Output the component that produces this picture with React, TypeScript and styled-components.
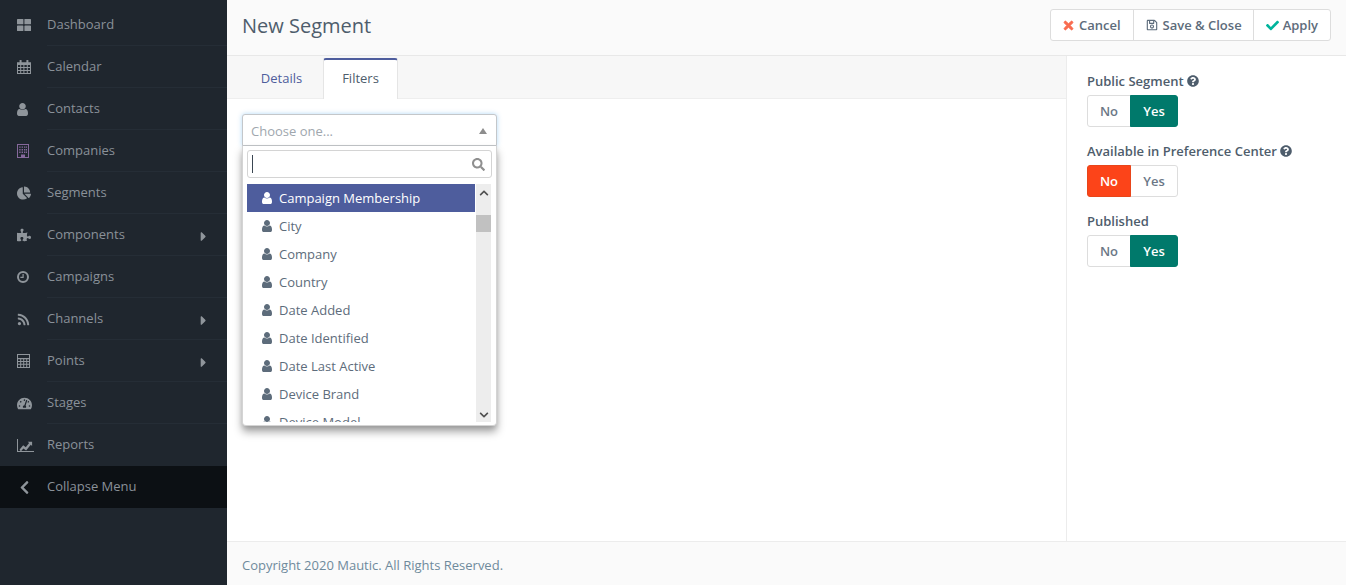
import React from 'react';
import styled, { createGlobalStyle } from 'styled-components';
import {
  FaChartPie, FaPuzzlePiece, FaRss, FaTachometerAlt, FaChevronLeft, FaCaretRight, FaTimes, FaRegSave,
  FaCheck, FaQuestionCircle, FaSearch, FaChevronUp, FaChevronDown,
} from 'react-icons/fa';

const Global = createGlobalStyle`
  html, body { margin: 0; padding: 0; height: 100%; overflow: hidden; background: #fff; }
  body { font-family: "Open Sans", "Liberation Sans", sans-serif; font-size: 13px; color: #4e5d6c; }
  #root { height: 100%; }
`;

const Shell = styled.div`
  display: flex;
  width: 1346px;
  height: 585px;
`;

const Sidebar = styled.nav`
  width: 227px;
  flex: none;
  background: #1f262e;
  padding-top: 4px;
  box-sizing: border-box;
`;

const NavRow = styled.div<{ $dark?: boolean }>`
  display: flex;
  align-items: center;
  height: 42px;
  box-sizing: border-box;
  padding-left: 17px;
  background: ${p => (p.$dark ? '#0c1014' : 'transparent')};
`;

const NavIcon = styled.span`
  width: 30px;
  flex: none;
  display: flex;
  align-items: center;
  color: #8f959b;
  font-size: 15px;
`;

const NavLabel = styled.span<{ $line?: boolean }>`
  flex: 1;
  align-self: stretch;
  display: flex;
  align-items: center;
  justify-content: space-between;
  padding: 0 16px 2px 0;
  font-size: 13px;
  color: #8a9199;
  border-bottom: 1px solid ${p => (p.$line ? '#252d36' : 'transparent')};
`;

const Arrow = styled(FaCaretRight)`
  color: #8f959b;
  font-size: 15px;
  margin-top: 5px;
`;

const Glyph = styled.svg`
  display: block;
  fill: currentColor;
  flex: none;
`;

const UserGlyph = ({ w, h }: { w: number; h: number }) => (
  <Glyph width={w} height={h} viewBox="256 128 1280 1536" preserveAspectRatio="none">
    <path d="M1536 1399q0 109-62.5 187t-150.5 78h-854q-88 0-150.5-78t-62.5-187q0-85 8.5-160.5t31.5-152 58.5-131 94-89 134.5-34.5q131 128 313 128t313-128q76 0 134.5 34.5t94 89 58.5 131 31.5 152 8.5 160.5zm-256-887q0 159-112.5 271.5t-271.5 112.5-271.5-112.5-112.5-271.5 112.5-271.5 271.5-112.5 271.5 112.5 112.5 271.5z" />
  </Glyph>
);

const GridGlyph = () => (
  <Glyph width="14" height="12" viewBox="0 0 14 12">
    <rect x="0" y="0" width="6.4" height="5.3" rx="0.6" />
    <rect x="7.4" y="0" width="6.6" height="5.3" rx="0.6" />
    <rect x="0" y="6.5" width="6.4" height="5.5" rx="0.6" />
    <rect x="7.4" y="6.5" width="6.6" height="5.5" rx="0.6" />
  </Glyph>
);

const CalendarGlyph = () => (
  <Glyph width="14" height="14" viewBox="0 0 14 14">
    <path fillRule="evenodd" d="M0 2.2h14V14H0zM1 5v2h2.2V5zm3.2 0v2h2.2V5zm3.2 0v2h2.4V5zm3.4 0v2H13V5zM1 8v2h2.2V8zm3.2 0v2h2.2V8zm3.2 0v2h2.4V8zm3.4 0v2H13V8zM1 11v2h2.2v-2zm3.2 0v2h2.2v-2zm3.2 0v2h2.4v-2zm3.4 0v2H13v-2z" />
    <rect x="2.6" y="0" width="2" height="3.4" rx="0.6" />
    <rect x="9.4" y="0" width="2" height="3.4" rx="0.6" />
  </Glyph>
);

const BuildingGlyph = () => (
  <Glyph width="12" height="14" viewBox="0 0 12 14" color="#85689b">
    <path fillRule="evenodd" d="M0 0h12v14H0zM1 1v12h3v-2.4h4V13h3V1z" />
    <path d="M2.2 2.4h1.4v1.4H2.2zM4.6 2.4H6v1.4H4.6zM7 2.4h1.4v1.4H7zM9 2.4h1v1.4H9zM2.2 5h1.4v1.4H2.2zM4.6 5H6v1.4H4.6zM7 5h1.4v1.4H7zM9 5h1v1.4H9zM2.2 7.6h1.4V9H2.2zM4.6 7.6H6V9H4.6zM7 7.6h1.4V9H7zM9 7.6h1V9H9z" />
  </Glyph>
);

const ClockGlyph = () => (
  <Glyph width="12" height="12" viewBox="0 0 12 12">
    <circle cx="6" cy="6" r="5" fill="none" stroke="currentColor" strokeWidth="2" />
    <path d="M5.5 3h1.2v3.9H3.4V5.8h2.1z" />
  </Glyph>
);

const CalcGlyph = () => (
  <Glyph width="13" height="14" viewBox="0 0 13 14">
    <path fillRule="evenodd" d="M0 0h13v14H0zM1 1v3h11V1zM1 5.2V7h2.2V5.2zm3.2 0V7h2V5.2zm3 0V7h2V5.2zm3 0V7H12V5.2zM1 8v1.8h2.2V8zm3.2 0v1.8h2V8zm3 0v1.8h2V8zm3 0v1.8H12V8zM1 10.8V13h2.2v-2.2zm3.2 0V13h2v-2.2zm3 0V13h2v-2.2zm3 0V13H12v-2.2z" />
  </Glyph>
);

const ChartGlyph = () => (
  <Glyph width="17" height="13" viewBox="0 0 17 13">
    <path d="M0 0h1v12h16v1H0z" />
    <path d="M2.6 10.4l3.6-4.2 2.6 2 3.3-4.2-1.4-1.2h4.4v4.3l-1.3-1.3-4.7 5.6-2.7-2-2.6 3z" />
  </Glyph>
);

const Main = styled.div`
  flex: 1;
  min-width: 0;
  display: flex;
  flex-direction: column;
`;

const Header = styled.header`
  height: 56px;
  box-sizing: border-box;
  flex: none;
  display: flex;
  align-items: center;
  justify-content: space-between;
  padding: 0 15px;
  background: #fafafa;
  border-bottom: 1px solid #e8e8e8;
`;

const Title = styled.h1`
  margin: 0 0 4px;
  font-size: 20px;
  font-weight: 400;
  color: #4e5d6c;
`;

const ButtonGroup = styled.div`
  display: flex;
  height: 32px;
  margin-top: -5px;
  border: 1px solid #ddd;
  border-radius: 3px;
  background: #fff;
  box-sizing: border-box;
`;

const ToolButton = styled.button<{ $left: number; $right: number; $gap: number }>`
  display: flex;
  align-items: center;
  gap: ${p => p.$gap}px;
  height: 100%;
  padding: 0 ${p => p.$right}px 0 ${p => p.$left}px;
  border: 0;
  border-left: 1px solid #ddd;
  background: transparent;
  font: 600 13px "Open Sans", sans-serif;
  color: #5d6c7b;
  &:first-child { border-left: 0; }
`;

const CancelIcon = styled(FaTimes)`
  color: #f86b4f;
  font-size: 13px;
  stroke: currentColor;
  stroke-width: 30;
`;

const Body = styled.div`
  flex: 1;
  min-height: 0;
  display: flex;
`;

const Content = styled.section`
  width: 840px;
  flex: none;
  box-sizing: border-box;
  border-right: 1px solid #ececec;
`;

const Tabs = styled.div`
  display: flex;
  height: 43px;
  box-sizing: border-box;
  padding-left: 15px;
  background: #f7f7f7;
  border-bottom: 1px solid #eee;
`;

const Tab = styled.div<{ $active?: boolean }>`
  display: flex;
  align-items: center;
  justify-content: center;
  height: 41px;
  box-sizing: border-box;
  margin-top: 2px;
  width: ${p => (p.$active ? 75 : 81)}px;
  padding: 0 ${p => (p.$active ? 0 : 2)}px 4px 0;
  font-size: 13px;
  color: ${p => (p.$active ? '#4e5d6c' : '#4e5d9c')};
  background: ${p => (p.$active ? '#fff' : 'transparent')};
  border-top: 2px solid ${p => (p.$active ? '#4e5d9d' : 'transparent')};
  border-left: 1px solid ${p => (p.$active ? '#e5e5e5' : 'transparent')};
  border-right: 1px solid ${p => (p.$active ? '#e5e5e5' : 'transparent')};
  border-radius: 3px 3px 0 0;
`;

const Pane = styled.div`
  position: relative;
  padding: 15px;
`;

const Select = styled.div`
  width: 255px;
  box-sizing: border-box;
  height: 32px;
  display: flex;
  align-items: center;
  justify-content: space-between;
  padding: 1px 9px 0 8px;
  background: #fff;
  border: 1px solid #c4c7ca;
  border-radius: 3px 3px 0 0;
  box-shadow: 0 0 5px rgba(82, 168, 236, 0.45);
  color: #a0a7ae;
  font-size: 13px;
`;

const Caret = styled.span`
  width: 0;
  height: 0;
  border-left: 4px solid transparent;
  border-right: 4px solid transparent;
  border-bottom: 6px solid #8d8d8d;
`;

const Drop = styled.div`
  position: absolute;
  left: 15px;
  top: 47px;
  width: 255px;
  height: 280px;
  box-sizing: border-box;
  padding: 4px 4px 0;
  background: #fff;
  border: 1px solid #d4d4d4;
  border-top: 0;
  border-radius: 0 0 4px 4px;
  box-shadow: 0 6px 8px rgba(0, 0, 0, 0.35), 0 2px 4px rgba(0, 0, 0, 0.1);
`;

const SearchBox = styled.div`
  height: 28px;
  box-sizing: border-box;
  display: flex;
  align-items: center;
  justify-content: space-between;
  padding: 0 6px 0 4px;
  border: 1px solid #d4d4d4;
  border-radius: 3px;
`;

const Cursor = styled.span`
  width: 1px;
  height: 18px;
  background: #3a4652;
`;

const SearchIcon = styled(FaSearch)`
  color: #8f8f8f;
  font-size: 13px;
`;

const ListWrap = styled.div`
  display: flex;
  margin-top: 6px;
  height: 238px;
`;

const Options = styled.ul`
  flex: 1;
  min-width: 0;
  margin: 0 1px 0 0;
  padding: 0;
  list-style: none;
  overflow: hidden;
`;

const Option = styled.li<{ $active?: boolean }>`
  display: flex;
  align-items: center;
  gap: 7px;
  height: 28px;
  padding-left: 15px;
  font-size: 13px;
  background: ${p => (p.$active ? '#4e5d9d' : 'transparent')};
  color: ${p => (p.$active ? '#fff' : '#5d6c7b')};
`;

const Track = styled.div`
  width: 15px;
  flex: none;
  margin-right: 1px;
  display: flex;
  flex-direction: column;
  align-items: center;
  background: #ededed;
  color: #505050;
  font-size: 10px;
`;

const TrackButton = styled.span`
  height: 15px;
  flex: none;
  display: flex;
  align-items: center;
  justify-content: center;
  margin-top: 1px;
`;

const Thumb = styled.div`
  width: 100%;
  height: 17px;
  margin-top: 15px;
  background: #c1c1c1;
`;

const Spring = styled.div`
  flex: 1;
`;

const Aside = styled.aside`
  flex: 1;
  padding: 15px 20px;
`;

const FieldLabel = styled.div`
  display: flex;
  align-items: center;
  gap: 3px;
  height: 19px;
  font-size: 13px;
  font-weight: 600;
  color: #4e5d6c;
`;

const Toggle = styled.div`
  display: flex;
  width: 91px;
  height: 32px;
  margin: 5px 0 14px;
`;

const ToggleButton = styled.div<{ $on?: 'red' | 'green'; $w: number }>`
  position: relative;
  z-index: ${p => (p.$on ? 1 : 0)};
  width: ${p => p.$w}px;
  flex: none;
  display: flex;
  align-items: center;
  justify-content: center;
  box-sizing: border-box;
  font-size: 13px;
  font-weight: 600;
  background: ${p => (p.$on === 'red' ? '#fc4419' : p.$on === 'green' ? '#00796b' : '#fff')};
  color: ${p => (p.$on ? '#fff' : '#6b7786')};
  border: 1px solid ${p => (p.$on === 'red' ? '#e8451a' : p.$on === 'green' ? '#00796b' : '#ddd')};
  &:first-child { border-radius: 3px 0 0 3px; }
  &:last-child { border-radius: 0 3px 3px 0; margin-left: -1px; }
`;

const Footer = styled.footer`
  height: 44px;
  flex: none;
  box-sizing: border-box;
  display: flex;
  align-items: center;
  padding: 2px 15px 0;
  background: #fafafa;
  border-top: 1px solid #ececec;
  color: #6f8a9c;
  font-size: 13px;
`;

const nav: [React.ReactNode, string, boolean?][] = [
  [<GridGlyph />, 'Dashboard'],
  [<CalendarGlyph />, 'Calendar'],
  [<UserGlyph w={11} h={13} />, 'Contacts'],
  [<BuildingGlyph />, 'Companies'],
  [<FaChartPie size={14} />, 'Segments'],
  [<FaPuzzlePiece size={14} />, 'Components', true],
  [<ClockGlyph />, 'Campaigns'],
  [<FaRss size={13} />, 'Channels', true],
  [<CalcGlyph />, 'Points', true],
  [<FaTachometerAlt size={15} />, 'Stages'],
  [<ChartGlyph />, 'Reports'],
];

const options = ['Campaign Membership', 'City', 'Company', 'Country', 'Date Added', 'Date Identified', 'Date Last Active', 'Device Brand', 'Device Model'];

const Switch = ({ on }: { on: 'no' | 'yes' }) => (
  <Toggle>
    <ToggleButton $w={44} $on={on === 'no' ? 'red' : undefined}>No</ToggleButton>
    <ToggleButton $w={48} $on={on === 'yes' ? 'green' : undefined}>Yes</ToggleButton>
  </Toggle>
);

export default function App() {
  return (
    <Shell>
      <Global />
      <Sidebar>
        {nav.map(([icon, label, sub], i) => (
          <NavRow key={label}>
            <NavIcon>{icon}</NavIcon>
            <NavLabel $line={i < nav.length - 1}>
              {label}
              {sub && <Arrow />}
            </NavLabel>
          </NavRow>
        ))}
        <NavRow $dark>
          <NavIcon><FaChevronLeft size={15} /></NavIcon>
          <NavLabel>Collapse Menu</NavLabel>
        </NavRow>
      </Sidebar>
      <Main>
        <Header>
          <Title>New Segment</Title>
          <ButtonGroup>
            <ToolButton $left={11} $right={12} $gap={4}><CancelIcon />Cancel</ToolButton>
            <ToolButton $left={12} $right={11} $gap={5}><FaRegSave size={12} />Save &amp; Close</ToolButton>
            <ToolButton $left={12} $right={12} $gap={4}><FaCheck color="#00b49c" size={13} />Apply</ToolButton>
          </ButtonGroup>
        </Header>
        <Body>
          <Content>
            <Tabs>
              <Tab>Details</Tab>
              <Tab $active>Filters</Tab>
            </Tabs>
            <Pane>
              <Select>Choose one...<Caret /></Select>
              <Drop>
                <SearchBox><Cursor /><SearchIcon /></SearchBox>
                <ListWrap>
                  <Options>
                    {options.map((o, i) => (
                      <Option key={o} $active={i === 0}><UserGlyph w={10} h={12} />{o}</Option>
                    ))}
                  </Options>
                  <Track>
                    <TrackButton><FaChevronUp /></TrackButton>
                    <Thumb />
                    <Spring />
                    <TrackButton><FaChevronDown /></TrackButton>
                  </Track>
                </ListWrap>
              </Drop>
            </Pane>
          </Content>
          <Aside>
            <FieldLabel>Public Segment <FaQuestionCircle size={12} /></FieldLabel>
            <Switch on="yes" />
            <FieldLabel>Available in Preference Center <FaQuestionCircle size={12} /></FieldLabel>
            <Switch on="no" />
            <FieldLabel>Published</FieldLabel>
            <Switch on="yes" />
          </Aside>
        </Body>
        <Footer>Copyright 2020 Mautic. All Rights Reserved.</Footer>
      </Main>
    </Shell>
  );
}
